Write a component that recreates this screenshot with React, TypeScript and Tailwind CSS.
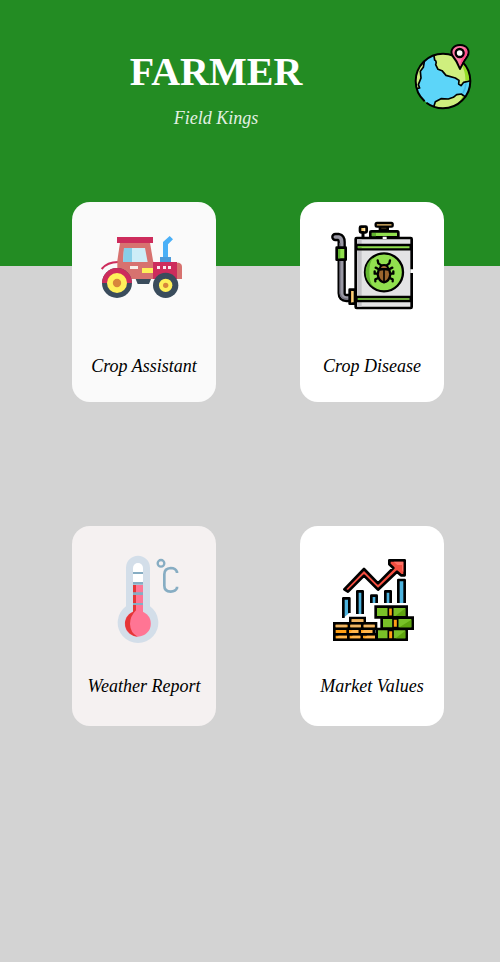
import type { ReactNode } from "react";

function GlobeIcon() {
  return (
    <svg viewBox="24 30 216 216" className="size-full" aria-hidden="true">
      <defs>
        <clipPath id="globe">
          <circle cx="129" cy="153" r="82" />
        </clipPath>
      </defs>
      <g clipPath="url(#globe)" stroke="#000" strokeWidth="5" strokeLinejoin="round">
        <circle cx="129" cy="153" r="82" fill="#5cd5f9" stroke="none" />
        <path d="M100 66 L104 90 Q111 93 107 104 L114 118 L126 122 L138 136 L166 144 L177 151 L176 162 L183 167 L191 157 L216 151 L206 80 L160 60 Z" fill="#cfef7e" />
        <path d="M185 105 Q197 126 196 152 L212 149 L214 110 L195 88 Z" fill="#96df28" stroke="none" />
        <path d="M73 95 L70 112 L61 124 L63 144 L55 164 L59 174 L44 177 L38 130 L55 92 Z" fill="#cfef7e" />
        <path d="M101 231 L106 215 L123 206 L145 207 L160 202 L170 194 L184 192 L196 201 L168 240 L110 240 Z" fill="#cfef7e" />
        <path d="M174 223 L188 198 L194 203 L186 220 Z" fill="#96df28" stroke="none" />
        <path d="M198 160 Q196 178 189 189" fill="none" stroke="#42b9ec" />
      </g>
      <circle cx="129" cy="153" r="82" fill="none" stroke="#000" strokeWidth="6" strokeDasharray="182 7 600" />
      <path d="M180 117 Q171 93 158 78 C148 62 160 45 180 45 C200 45 212 62 202 79 Q187 99 180 117 Z" fill="#ff78a5" stroke="#000" strokeWidth="6" strokeLinejoin="round" />
      <path d="M195 51 Q207 62 198 79 Q187 94 181 109 Q180 91 190 80 Q199 66 195 51 Z" fill="#ff4b88" />
      <circle cx="179" cy="69" r="12" fill="#fff" stroke="#000" strokeWidth="7" />
    </svg>
  );
}

function TractorIcon() {
  return (
    <svg viewBox="18 -21 288 288" className="size-full" aria-hidden="true">
      <path d="M35 132 Q52 111 84 111" fill="none" stroke="#cd2c5c" strokeWidth="6" />
      <path d="M90 53 H180 L190 112 V162 H82 V107 Z" fill="#d7726f" />
      <rect x="81" y="36" width="108" height="18" fill="#cd2c5c" />
      <path d="M102 69 H165 L173 111 H99 Z" fill="#cdedf7" />
      <path d="M102 69 H126 V111 H99 Z" fill="#87cee8" />
      <rect x="120" y="123" width="24" height="9" fill="#f7eee8" />
      <path d="M260 113 H267 Q276 116 276 125 V162 H260 Z" fill="#d7726f" />
      <rect x="189" y="111" width="72" height="51" fill="#cd2c5c" />
      <rect x="156" y="129" width="33" height="15" fill="#fff05a" />
      <path d="M201 123 H210 V132 H201 Z M219 123 H228 V132 H219 Z M234 123 H243 V132 H234 Z" fill="#fae8ef" />
      <rect x="210" y="96" width="33" height="15" fill="#4c9bda" />
      <path d="M219 96 V51 L239 33 L249 43 L234 58 V96 Z" fill="#4bb0f7" />
      <path d="M137 162 H183 L177 177 H143 Z" fill="#3a4c5c" />
      <circle cx="81" cy="174" r="45" fill="#3a4c5c" />
      <path d="M36 174 A45 45 0 0 1 126 174 Z" fill="#cd2c5c" />
      <circle cx="81" cy="174" r="30" fill="#fff05a" />
      <circle cx="81" cy="174" r="12.5" fill="#d8863c" />
      <circle cx="227" cy="181" r="38" fill="#3a4c5c" />
      <circle cx="227" cy="181" r="20" fill="#fff05a" />
      <circle cx="227" cy="181" r="8" fill="#d8863c" />
    </svg>
  );
}

function SprayerIcon() {
  return (
    <svg viewBox="12 24 288 288" className="size-full" aria-hidden="true">
      <g stroke="#000" strokeLinejoin="round" strokeLinecap="round">
        <path d="M46 81 H56 Q65 83 65 96 V250 Q65 264 79 264 H89" fill="none" strokeWidth="25" />
        <path d="M46 81 H56 Q65 83 65 96 V250 Q65 264 79 264 H89" fill="none" stroke="#9998a4" strokeWidth="11" />
        <path d="M60 100 V250 Q62 266 82 267" fill="none" stroke="#73717e" strokeWidth="4" />
        <rect x="50" y="113" width="27" height="36" fill="#91e04e" strokeWidth="8" />
        <path d="M54 117 H61 V145 H54 Z" fill="#62b52f" stroke="none" />
        <rect x="89" y="239" width="16" height="42" fill="#ffd983" strokeWidth="8" />
        <path d="M95 244 V276" stroke="#e9ad57" strokeWidth="3" />
        <path d="M129 65 V79" strokeWidth="9" />
        <rect x="120" y="50" width="20" height="17" rx="3" fill="#f8cb70" strokeWidth="8" />
        <path d="M133 55 V62" stroke="#ffe7ac" strokeWidth="4" />
        <path d="M180 49 H203 V59 H180 Z" fill="#e6a850" strokeWidth="8" />
        <rect x="167" y="39" width="51" height="11" rx="4" fill="#f7c770" strokeWidth="7" />
        <path d="M151 82 V67 Q151 64 155 64 H232 Q235 64 235 68 V82 Z" fill="#91e04e" strokeWidth="8" />
        <path d="M156 79 V69 H168 V79 Z" fill="#62b52f" stroke="none" />
        <rect x="107" y="84" width="168" height="210" rx="3" fill="#e3e3e5" strokeWidth="8" />
        <path d="M112 88 H125 V290 H112 Z" fill="#c4c3c8" stroke="none" />
        <path d="M110 105 H272 V118 H110 Z M110 261 H272 V273 H110 Z" fill="#91e04e" strokeWidth="7" />
        <path d="M113 109 H125 V114 H113 Z M113 265 H125 V269 H113 Z" fill="#62b52f" stroke="none" />
        <circle cx="192" cy="187" r="57" fill="#91e04e" strokeWidth="7" />
        <path d="M160 142 A54 54 0 0 0 160 231 Q148 216 148 187 Q148 158 160 142 Z" fill="#62b52f" stroke="none" />
        <path d="M173 151 L175 160 L185 167 M210 151 L208 160 L199 167 M173 191 H164 V184 M211 191 H220 V184 M175 204 L166 208 V214 M209 204 L218 208 V214 M175 177 L167 173 M209 177 L217 173" fill="none" strokeWidth="7" />
        <path d="M176 180 Q192 174 208 180 L211 193 Q208 214 192 217 Q176 214 173 193 Z" fill="#9a642d" strokeWidth="7" />
        <path d="M179 177 Q181 165 192 165 Q203 165 205 177 Z" fill="#a66d36" strokeWidth="6" />
        <path d="M192 180 V215" strokeWidth="5" />
      </g>
      <path d="M188 80 H200 V87 H188 Z M271 178 H281 V189 H271 Z" fill="#fff" />
    </svg>
  );
}

function ThermometerIcon() {
  return (
    <svg viewBox="-27 15 288 288" className="size-full" aria-hidden="true">
      <path d="M63 68 A36 36 0 0 1 135 68 V184 A61 61 0 1 1 63 184 Z" fill="#d3dee9" />
      <path d="M84 69 A15 15 0 0 1 114 69 V120 H84 Z" fill="#fff" />
      <rect x="84" y="120" width="30" height="90" fill="#ff7594" />
      <circle cx="98.5" cy="236" r="39" fill="#ff7594" />
      <path d="M84 120 H93 V196 Q75 214 75 237 Q76 264 98 275 A39 39 0 0 1 84 200 Z" fill="#e53637" />
      <path d="M84 81 H114 V87 H84 Z M84 111 H114 V119 H84 Z M84 142 H114 V150 H84 Z M84 174 H114 V180 H84 Z" fill="#87adc3" />
      <circle cx="168" cy="55" r="10" fill="none" stroke="#87adc3" strokeWidth="7" />
      <path d="M216 84 V81 Q212 69 197 69 Q178 70 178 88 V122 Q178 139 197 140 Q212 139 216 129 V125" fill="none" stroke="#87adc3" strokeWidth="8" />
    </svg>
  );
}

function MarketIcon() {
  return (
    <svg viewBox="12 15 288 288" className="size-full" aria-hidden="true">
      <g stroke="#000" strokeWidth="8" strokeLinejoin="round">
        <path d="M70 219 V160 H88 V204 M112 207 V139 H128 V207 M154 174 V152 H170 V174 M196 174 V139 H212 V174 M235 174 V105 H254 V174" fill="#4db4df" />
        <path d="M73 133 L132 72 L174 115 L220 69 L208 58 V46 H254 V91 H243 L231 80 L174 134 L132 92 L84 140 Z" fill="#f34e40" />
      </g>
      <path d="M212 50 H221 L232 60 H246 V76 L250 81 V50 Z" fill="#ff7166" />
      <g stroke="#000" strokeWidth="8">
        <path d="M167 185 H260 V217 H167 Z M185 218 H278 V251 H185 Z M170 252 H260 V284 H170 Z" fill="#79c128" />
        <path d="M91 219 H134 V235 H91 Z M43 235 H87 V251 H43 Z M87 235 H127 V251 H87 Z M127 235 H168 V251 H127 Z M43 251 H83 V268 H43 Z M83 251 H119 V268 H83 Z M119 251 H161 V268 H119 Z M43 268 H85 V284 H43 Z M85 268 H125 V284 H85 Z M125 268 H169 V284 H125 Z" fill="#ff9f14" />
      </g>
      <path d="M226 213 L256 190 V213 Z M238 247 L274 224 V247 Z M227 280 L256 257 V280 Z" fill="#5ea40f" />
      <path d="M95 223 H130 V231 H95 Z M47 239 H80 V247 H47 Z M91 239 H122 V247 H91 Z M131 239 H164 V247 H131 Z" fill="#efb665" />
      <path d="M98 255 L115 255 V264 H88 Z M56 272 H81 V280 H47 Z M98 272 H121 V280 H89 Z M141 272 H165 V280 H132 Z M132 255 H157 V264 H123 Z" fill="#ffb64c" />
      <g stroke="#000" strokeWidth="5">
        <path d="M205 188 H218 V214 H205 Z M219 222 H233 V248 H219 Z M205 256 H219 V282 H205 Z" fill="#ff9f14" />
      </g>
    </svg>
  );
}

type CardProps = { label: string; color: string; spacing: string; children: ReactNode };

function MenuCard({ label, color, spacing, children }: CardProps) {
  return (
    <button
      type="button"
      className={`flex h-50 w-36 flex-col items-center rounded-[18px] text-[18px] leading-6 text-black italic ${color} ${spacing}`}
    >
      <span className="size-24">{children}</span>
      <span className="whitespace-nowrap">{label}</span>
    </button>
  );
}

export default function App() {
  return (
    <div className="min-h-screen bg-[#d3d3d3] font-['Liberation_Serif',serif]">
      <header className="flex min-h-[266px] items-start bg-[#238c23] pt-10 pr-5 pl-6 text-white">
        <div className="flex-1 pt-2 text-center">
          <h1 className="text-[40px] leading-12 font-bold">FARMER</h1>
          <p className="mt-2.5 text-[18px] leading-6 text-[#e3f1e3] italic">Field Kings</p>
        </div>
        <button type="button" aria-label="Location" className="size-18 shrink-0">
          <GlobeIcon />
        </button>
      </header>
      <main className="-mt-16 grid grid-cols-[auto_auto] justify-between gap-y-31 pr-14 pb-16 pl-18">
        <MenuCard label="Crop Assistant" color="bg-[#fafafa]" spacing="pt-4 gap-10">
          <TractorIcon />
        </MenuCard>
        <MenuCard label="Crop Disease" color="bg-white" spacing="pt-4 gap-10">
          <SprayerIcon />
        </MenuCard>
        <MenuCard label="Weather Report" color="bg-[#f5f1f1]" spacing="pt-6 gap-7">
          <ThermometerIcon />
        </MenuCard>
        <MenuCard label="Market Values" color="bg-white" spacing="pt-6 gap-7">
          <MarketIcon />
        </MenuCard>
      </main>
    </div>
  );
}
